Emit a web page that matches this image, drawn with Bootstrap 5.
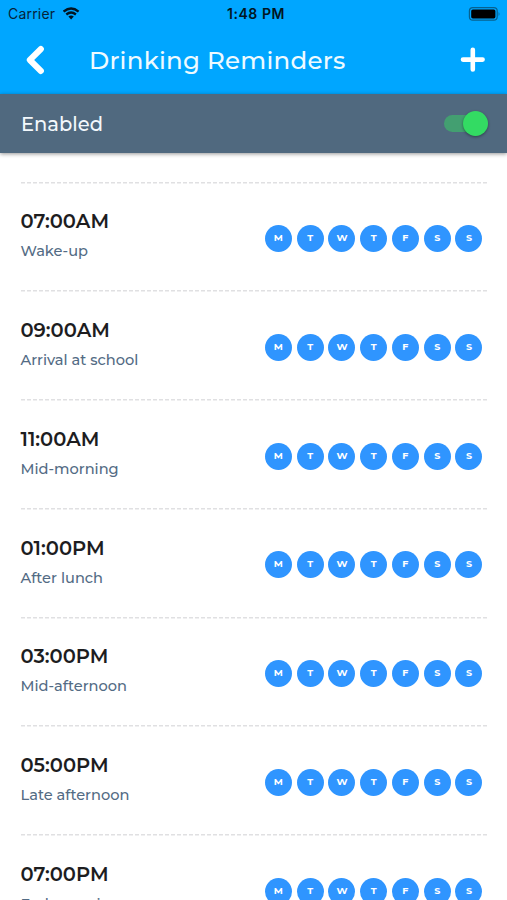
<!DOCTYPE html>
<html lang="en">
<head>
<meta charset="utf-8">
<meta name="viewport" content="width=device-width, initial-scale=1">
<title>Drinking Reminders</title>
<link href="https://cdn.jsdelivr.net/npm/bootstrap@5.3.0/dist/css/bootstrap.min.css" rel="stylesheet">
<style>
  html, body { height: 900px; overflow: hidden; }
  body { font-family: Montserrat, Inter, sans-serif; background: #fff; color: #1d1d1f; }
  .app-screen { height: 900px; }
  .app-head { background: #00a6ff; height: 94px; }
  .status-row { height: 27px; padding: 0 7px 0 8px; color: #06233a; font: 14px/27px Inter, sans-serif; }
  .status-row > div { flex: 1 1 0; }
  .carrier { letter-spacing: .2px; }
  .clock { font-weight: 600; color: #021522; letter-spacing: .55px; margin-left: 4px; }
  .title-row { height: 66px; padding: 0 21px 0 26px; }
  .page-title { font-size: 24.5px; line-height: 30px; font-weight: 500; letter-spacing: .25px; margin: 0 0 0 44px; color: #eefaff; }
  .enable-row { background: #50697f; height: 58.5px; padding: 0 19px 0 21px; box-shadow: 0 1px 4px rgba(0,0,0,.42); color: #f3f8fc; }
  .enable-label { font-size: 19.5px; font-weight: 500; margin-top: 2px; }
  .toggle-track { width: 44px; height: 17px; border-radius: 9px; background: #439f71; }
  .toggle-knob { width: 25px; height: 25px; border-radius: 50%; background: #33db63; box-shadow: 0 1px 3px rgba(0,0,0,.4); }
  .reminders { padding: 29px 19px 0 20.5px; }
  .reminder { height: 108.75px; padding: 26.75px 5.6px 0 0;
    background: repeating-linear-gradient(90deg, #e0e0e2 0 4px, #fff 4px 6px) top / 100% 1.5px no-repeat; }
  .time { font-size: 19.5px; line-height: 27px; font-weight: 600; }
  .note { font-size: 14.6px; line-height: 20px; margin-top: 6px; font-weight: 500; color: #536b84; }
  .days { gap: 4.75px; padding-top: 16.75px; }
  .day { width: 27px; height: 27px; border-radius: 50%; background: #2f95ff; color: #fff; font-size: 9.5px; line-height: 26px; font-weight: 700; text-align: center; }
</style>
<script src="https://cdn.jsdelivr.net/npm/bootstrap@5.3.0/dist/js/bootstrap.bundle.min.js"></script>
</head>
<body>
<div class="app-screen overflow-hidden">
  <header class="app-head">
    <div class="status-row d-flex align-items-center">
      <div class="d-flex align-items-center"><span class="carrier">Carrier</span>
        <svg class="ms-2" width="17" height="13" viewBox="0 0 17 13" fill="none" stroke="#021522" stroke-width="2.3"><path d="M.6 4.6Q8.1-1.7 15.6 4.6M3.3 7.5Q8.1 3.5 12.9 7.5"/><path d="M5.4 9.6Q8.1 7.6 10.8 9.6L8.1 12.5Z" fill="#021522" stroke="none"/></svg>
      </div>
      <span class="clock">1:48 PM</span>
      <div class="d-flex justify-content-end">
        <svg width="32" height="14" viewBox="0 0 32 14"><rect x="1.4" y=".6" width="27.8" height="12.6" rx="3.4" fill="none" stroke="#07618f" stroke-width="1.2"/><rect x="3.2" y="2.4" width="24.2" height="9" rx="1.6" fill="#000"/><path d="M30.6 5Q32.3 7 30.6 9Z" fill="#07618f"/></svg>
      </div>
    </div>
    <div class="title-row d-flex align-items-center">
      <svg width="19" height="30" viewBox="0 0 19 30" fill="none" stroke="#fff" stroke-width="6" stroke-linecap="round" stroke-linejoin="round"><path d="M14.9 4L3.8 15L14.9 26"/></svg>
      <h1 class="page-title text-nowrap">Drinking Reminders</h1>
      <svg class="ms-auto" width="26" height="26" viewBox="0 0 26 26" stroke="#fff" stroke-width="4.6" stroke-linecap="round"><path d="M12.8 2.8V22.4M3 12.6H22.6"/></svg>
    </div>
  </header>
  <section class="enable-row position-relative d-flex align-items-center justify-content-between">
    <span class="enable-label">Enabled</span>
    <div class="toggle-track d-flex align-items-center justify-content-end" role="switch" aria-checked="true"><div class="toggle-knob"></div></div>
  </section>
  <main class="reminders" id="reminders"></main>
</div>
<script>
  const reminders = [
    ['07:00AM', 'Wake-up'],
    ['09:00AM', 'Arrival at school'],
    ['11:00AM', 'Mid-morning'],
    ['01:00PM', 'After lunch'],
    ['03:00PM', 'Mid-afternoon'],
    ['05:00PM', 'Late afternoon'],
    ['07:00PM', 'Early evening']
  ];
  const days = [...'MTWTFSS'].map(d => `<span class="day">${d}</span>`).join('');
  document.getElementById('reminders').innerHTML = reminders.map(([time, note]) => `
    <article class="reminder d-flex justify-content-between">
      <div class="text-nowrap">
        <div class="time">${time}</div>
        <div class="note">${note}</div>
      </div>
      <div class="days d-flex">${days}</div>
    </article>`).join('');
</script>
</body>
</html>
